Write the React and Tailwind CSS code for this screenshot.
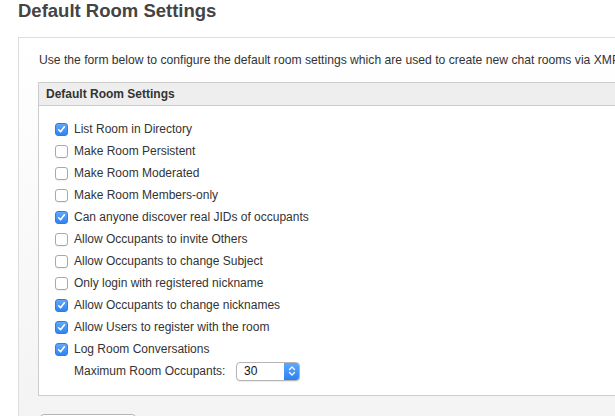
const settings = [
  { label: "List Room in Directory", checked: true },
  { label: "Make Room Persistent", checked: false },
  { label: "Make Room Moderated", checked: false },
  { label: "Make Room Members-only", checked: false },
  { label: "Can anyone discover real JIDs of occupants", checked: true },
  { label: "Allow Occupants to invite Others", checked: false },
  { label: "Allow Occupants to change Subject", checked: false },
  { label: "Only login with registered nickname", checked: false },
  { label: "Allow Occupants to change nicknames", checked: true },
  { label: "Allow Users to register with the room", checked: true },
  { label: "Log Room Conversations", checked: true },
];

function Checkbox({ checked }) {
  if (checked) {
    return (
      <span className="w-[13px] h-[13px] rounded-[3px] bg-gradient-to-b from-[#5fa8fb] to-[#2f84f3] border border-[#2d7de6] flex items-center justify-center shrink-0">
        <svg width="9" height="9" viewBox="0 0 9 9">
          <path
            d="M1.6 4.8 L3.6 6.8 L7.4 1.8"
            fill="none"
            stroke="white"
            strokeWidth="1.6"
            strokeLinecap="round"
            strokeLinejoin="round"
          />
        </svg>
      </span>
    );
  }
  return (
    <span className="w-[13px] h-[13px] rounded-[3px] bg-white border border-[#a9a9a9] shadow-[0_1px_0_rgba(0,0,0,0.05)] shrink-0" />
  );
}

export default function App() {
  return (
    <div
      className="w-[615px] h-[416px] overflow-hidden bg-white pl-[18px]"
      style={{ fontFamily: '"Liberation Sans", Arial, sans-serif' }}
    >
      <h1 className="text-[18.5px] leading-[22px] font-bold text-[#444] m-0">
        Default Room Settings
      </h1>

      <div className="mt-[15px] w-[760px] border border-[#dddddd] bg-gradient-to-b from-white to-[#f2f2f2] pl-[19px] pt-[14px] pb-[30px]">
        <p className="text-[12.15px] leading-[16px] text-[#333] pl-[1px] whitespace-nowrap">
          Use the form below to configure the default room settings which are used to create new chat rooms via XMPP.
        </p>

        <div className="mt-[14px] border border-[#cccccc] bg-white">
          <div className="h-[23px] bg-[#eeeeee] border-b border-[#cccccc] pl-[7px] flex items-center text-[12px] font-bold text-[#333]">
            Default Room Settings
          </div>

          <div className="pl-[16px] pt-[12px] pb-[13px]">
            {settings.map((s) => (
              <label
                key={s.label}
                className="h-[22px] flex items-center gap-[6px] text-[12px] text-[#333]"
              >
                <Checkbox checked={s.checked} />
                <span>{s.label}</span>
              </label>
            ))}

            <div className="h-[22px] flex items-center pl-[19px] text-[12px] text-[#333]">
              <span className="w-[162px]">Maximum Room Occupants:</span>
              <div className="w-[64px] h-[19px] flex rounded-[4px] border border-[#b5b5b5] bg-white overflow-hidden shadow-[0_1px_1px_rgba(0,0,0,0.08)]">
                <span className="flex-1 pl-[7px] flex items-center text-[12px] text-[#111]">
                  30
                </span>
                <span className="w-[15px] bg-gradient-to-b from-[#5ea7fb] to-[#2b80f2] flex items-center justify-center">
                  <svg width="8" height="12" viewBox="0 0 8 12">
                    <path
                      d="M1.5 4.5 L4 2 L6.5 4.5 M1.5 7.5 L4 10 L6.5 7.5"
                      fill="none"
                      stroke="white"
                      strokeWidth="1.3"
                      strokeLinecap="round"
                      strokeLinejoin="round"
                    />
                  </svg>
                </span>
              </div>
            </div>
          </div>
        </div>

        <button className="mt-[18px] ml-[2px] px-[10px] h-[22px] rounded-[4px] border border-[#b5b5b5] bg-white text-[12px] text-[#333]">
          Save Settings
        </button>
      </div>
    </div>
  );
}
